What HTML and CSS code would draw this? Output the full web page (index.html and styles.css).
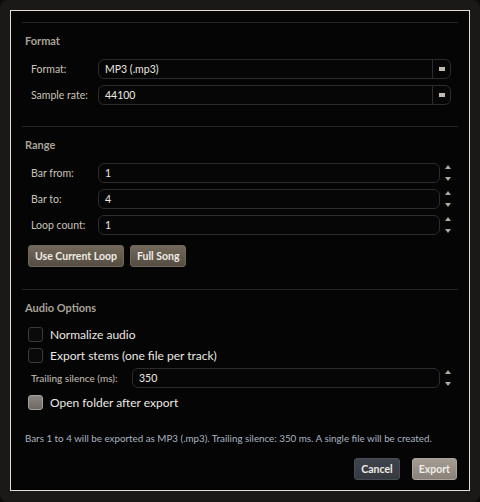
FILE: index.html
```html
<!DOCTYPE html>
<html lang="en">
<head>
  <meta charset="UTF-8">
  <title>Export Audio</title>
  <link rel="stylesheet" href="styles.css">
</head>
<body>

  <div class="frame">
    <div class="panel">

      <div class="section">
        <h3>Format</h3>
        <div class="row">
          <label>Format:</label>
          <div class="select"><span>MP3 (.mp3)</span><i class="drop"><b></b></i></div>
        </div>
        <div class="row">
          <label>Sample rate:</label>
          <div class="select"><span>44100</span><i class="drop"><b></b></i></div>
        </div>
      </div>

      <div class="section range">
        <h3>Range</h3>
        <div class="row">
          <label>Bar from:</label>
          <div class="spin"><div class="input">1</div><i class="arrows"><b class="up"></b><b class="down"></b></i></div>
        </div>
        <div class="row">
          <label>Bar to:</label>
          <div class="spin"><div class="input">4</div><i class="arrows"><b class="up"></b><b class="down"></b></i></div>
        </div>
        <div class="row">
          <label>Loop count:</label>
          <div class="spin"><div class="input">1</div><i class="arrows"><b class="up"></b><b class="down"></b></i></div>
        </div>
        <div class="btns">
          <button class="btn">Use Current Loop</button>
          <button class="btn">Full Song</button>
        </div>
      </div>

      <div class="section last">
        <h3>Audio Options</h3>
        <div class="check"><span class="box"></span>Normalize audio</div>
        <div class="check"><span class="box"></span>Export stems (one file per track)</div>
        <div class="row silence">
          <label>Trailing silence (ms):</label>
          <div class="spin"><div class="input">350</div><i class="arrows"><b class="up"></b><b class="down"></b></i></div>
        </div>
        <div class="check"><span class="box on"></span>Open folder after export</div>
      </div>

      <p class="summary">Bars 1 to 4 will be exported as MP3 (.mp3). Trailing silence: 350 ms. A single file will be created.</p>

      <div class="footer">
        <button class="btn cancel">Cancel</button>
        <button class="btn export">Export</button>
      </div>

    </div>
  </div>

</body>
</html>
```

FILE: styles.css
```css
body {
  margin: 0;
  background: #0c0c0c;
  font-family: 'Lato', sans-serif;
  font-size: 10.5px;
  color: #d8d4cc;
}

.frame {
  width: 480px;
  height: 502px;
  box-sizing: border-box;
  padding: 10px;
  background: #1a1918;
  border-radius: 8px;
}

.panel {
  height: 481px;
  box-sizing: border-box;
  border: 1px solid #e6ddd2;
  background: #050505;
  padding: 11px 11px 0 11px;
}

.section {
  border-top: 1px solid #262626;
  padding: 0 3px 15px 3px;
}

.section.range {
  padding-bottom: 22px;
}

.section.last {
  padding-bottom: 0;
}

h3 {
  margin: 0;
  padding: 11px 0 11px;
  font-size: 11px;
  font-weight: bold;
  color: #a8a298;
  line-height: 14px;
}

.row {
  display: flex;
  align-items: center;
  height: 20px;
  margin-bottom: 6px;
  padding-left: 6px;
}

.row label {
  width: 67px;
  color: #c8c2b8;
}

.select {
  flex: 1;
  display: flex;
  height: 20px;
  box-sizing: border-box;
  border: 1px solid #2c2c2c;
  border-radius: 6px;
  margin-right: 4px;
  background: #060606;
}

.select span, .input {
  flex: 1;
  padding-left: 6px;
  line-height: 18px;
  color: #ece8e2;
}

.drop {
  width: 17px;
  border-left: 1px solid #2c2c2c;
  display: flex;
  align-items: center;
  justify-content: center;
}

.drop b {
  width: 6px;
  height: 4px;
  background: #c4bbb0;
}

.spin {
  flex: 1;
  display: flex;
}

.input {
  height: 20px;
  box-sizing: border-box;
  border: 1px solid #2c2c2c;
  border-radius: 6px;
  background: #060606;
}

.arrows {
  width: 15px;
  display: flex;
  flex-direction: column;
  align-items: center;
  justify-content: space-between;
  padding: 2px 0;
  box-sizing: border-box;
}

.arrows b {
  width: 0;
  height: 0;
  border-left: 3px solid transparent;
  border-right: 3px solid transparent;
}

.arrows .up {
  border-bottom: 4px solid #b5ab9c;
}

.arrows .down {
  border-top: 4px solid #b5ab9c;
}

.btns {
  display: flex;
  gap: 6px;
  padding: 4px 0 0 3px;
}

.btn {
  height: 22px;
  padding: 0 6px;
  font-family: inherit;
  font-size: 10.5px;
  font-weight: bold;
  color: #f0ece4;
  border: 1px solid #6f675b;
  border-radius: 3px;
  background: linear-gradient(#72695b, #554d42);
}

.check {
  display: flex;
  align-items: center;
  height: 16px;
  margin-bottom: 5px;
  padding-left: 3px;
  font-size: 12px;
  color: #ece8e2;
}

.box {
  width: 15px;
  height: 15px;
  box-sizing: border-box;
  border: 1px solid #3a3a3a;
  border-radius: 3px;
  background: #0a0a0a;
  margin-right: 7px;
}

.box.on {
  border-color: #a8a29a;
  background: linear-gradient(#8c8781, #6c6863);
}

.silence {
  margin-bottom: 6px;
}

.silence label {
  width: 101px;
  font-size: 10px;
}

.summary {
  margin: 21px 0 0;
  padding: 0 3px;
  font-size: 9.8px;
  line-height: 14px;
  color: #a9b4c0;
}

.footer {
  display: flex;
  justify-content: flex-end;
  gap: 12px;
  padding: 13px 1px 0 0;
}

.footer .btn {
  padding: 0 6px;
}

.cancel {
  border-color: #474c55;
  background: linear-gradient(#3f444d, #353940);
}

.export {
  border-color: #aaa49a;
  background: linear-gradient(#a39d93, #88827a);
}
```
